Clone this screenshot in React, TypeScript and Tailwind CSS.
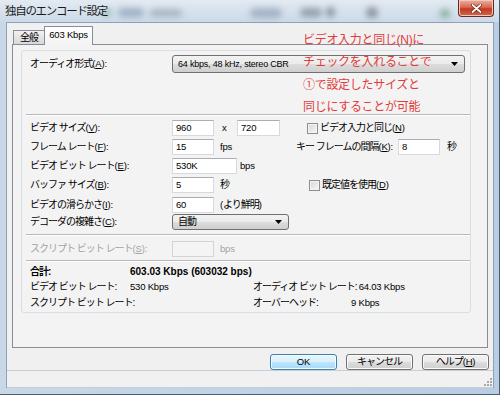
import type { ReactNode } from "react";

// Win7 style "独自のエンコード設定" dialog

function Mn({ jp, k, colon = true }: { jp: string; k: string; colon?: boolean }) {
  return (
    <span className="whitespace-nowrap">
      <span className="text-[10px] tracking-[-1px]">{jp}</span>(
      <span className="underline underline-offset-1">{k}</span>){colon ? ":" : ""}
    </span>
  );
}

function Jp({ children }: { children: ReactNode }) {
  return <span className="whitespace-nowrap text-[10px] tracking-[-1px]">{children}</span>;
}

function TextBox({ value, w, disabled }: { value?: string; w: string; disabled?: boolean }) {
  return (
    <div
      className={`flex h-[16px] shrink-0 items-center border pl-[3px] leading-none ${w} ${
        disabled
          ? "border-[#d4d4d4] bg-[#f4f4f4]"
          : "border-[#d6d9e0] border-t-[#abadb3] bg-white"
      }`}
    >
      {value}
    </div>
  );
}

function Combo({ text, w, h }: { text: ReactNode; w: string; h: string }) {
  return (
    <div
      className={`flex shrink-0 items-center justify-between rounded-[3px] border border-[#707070] bg-[linear-gradient(#f2f2f2,#ebebeb_50%,#dddddd_50%,#cfcfcf)] pl-[5px] pr-[6px] leading-none ${w} ${h}`}
    >
      <span>{text}</span>
      <svg width="7" height="4" viewBox="0 0 7 4" aria-hidden="true">
        <path d="M0 0h7L3.5 4z" fill="#000" />
      </svg>
    </div>
  );
}

function Check() {
  return (
    <span className="inline-block h-[11px] w-[11px] shrink-0 border border-[#8f8f8f] bg-[linear-gradient(135deg,#d8d8d8,#f7f7f7)] shadow-[inset_0_0_0_1px_#f4f4f4]" />
  );
}

function Sep() {
  return <div className="ml-[4px] h-px bg-[#b9b9b9] shadow-[0_1px_0_#ffffff]" />;
}

function Btn({ children, primary }: { children: ReactNode; primary?: boolean }) {
  return (
    <div
      className={`flex h-[16px] w-[67px] items-center justify-center rounded-[3px] border leading-none ${
        primary
          ? "border-[#3c7fb1] bg-[linear-gradient(#eaf6fd,#d9f0fc_50%,#bee6fd_50%,#a7d9f5)] shadow-[inset_0_0_0_1px_#f2fbff]"
          : "border-[#707070] bg-[linear-gradient(#f2f2f2,#ebebeb_50%,#dddddd_50%,#cfcfcf)] shadow-[inset_0_0_0_1px_#fbfbfb]"
      }`}
    >
      {children}
    </div>
  );
}

const blobs = [
  "left-[103px] top-[9px] h-[7px] w-[8px] bg-[#5f9a7a]",
  "left-[118px] top-[8px] h-[9px] w-[26px] bg-[#7c93ad]",
  "left-[150px] top-[9px] h-[8px] w-[32px] bg-[#8e9aa8]",
  "left-[250px] top-[8px] h-[10px] w-[32px] bg-[#8496ab]",
  "left-[300px] top-[8px] h-[9px] w-[22px] bg-[#6b7785]",
  "left-[326px] top-[7px] h-[10px] w-[9px] bg-[#59626c]",
  "left-[366px] top-[7px] h-[11px] w-[12px] bg-[#5c6570]",
  "left-[440px] top-[9px] h-[9px] w-[10px] bg-[#4f8f63]",
];

export default function App() {
  return (
    <div className="relative flex h-[395px] w-[500px] flex-col overflow-hidden border-b border-r border-[#4c5d70] bg-[linear-gradient(90deg,#c9d8e8,#b8cde4)] font-['Liberation_Sans','Noto_Sans_CJK_JP',sans-serif] text-[9.5px] tracking-[-0.2px] text-black">
      {/* title bar */}
      <div className="relative flex h-[22px] shrink-0 items-start bg-[linear-gradient(#e3eaf2,#cbd9e8)]">
        {blobs.map((b) => (
          <div key={b} className={`absolute rounded-full opacity-60 blur-[3px] ${b}`} />
        ))}
        <span className="relative pl-[5px] pt-[4px] text-[11.5px] leading-[14px] tracking-[-1.3px] text-[#1b1b1b]">
          独自のエンコード設定
        </span>
        <div className="relative ml-auto mr-[5px] flex h-[17px] w-[36px] items-center justify-center rounded-b-[4px] border border-t-0 border-[#6a2a20] bg-[linear-gradient(#eab0a2,#d86a52_45%,#c4391f_55%,#cf6a4c)] shadow-[inset_0_0_0_1px_#f3c7bb]">
          <svg width="11" height="9" viewBox="0 0 11 9" aria-hidden="true">
            <path d="M1.5 1l8 7M9.5 1l-8 7" stroke="#5a1a10" strokeWidth="3" strokeLinecap="round" />
            <path d="M1.5 1l8 7M9.5 1l-8 7" stroke="#ffffff" strokeWidth="1.8" strokeLinecap="round" />
          </svg>
        </div>
      </div>

      {/* frame body */}
      <div className="flex flex-1 flex-col pb-[6px] pl-[6px] pr-[5px]">
        <div className="flex flex-1 flex-col border-x border-t border-[#8ea1b5] bg-[#f0f0f0]">
          {/* tabs */}
          <div className="flex h-[21px] shrink-0 items-end pl-[6px]">
            <div className="flex h-[14px] w-[32px] items-center justify-center border border-b-0 border-[#898c95] bg-[linear-gradient(#f2f2f2,#e4e4e4_50%,#d9d9d9)] leading-none">
              <Jp>全般</Jp>
            </div>
            <div className="relative z-10 -mb-px -ml-px flex h-[19px] w-[49px] items-center justify-center border border-b-0 border-[#898c95] bg-[linear-gradient(#ffffff,#f3f3f3)] pb-[2px] leading-none">
              603 Kbps
            </div>
          </div>

          {/* tab page */}
          <div className="mx-[5px] h-[304px] shrink-0 border border-[#898c95] bg-[#f3f3f3]">
            <div className="ml-[8px] mr-[16px] mt-[5px] flex h-[263px] flex-col rounded-[3px] border border-[#d5dfe5]">
              <div className="mt-[4px] flex h-[18px] items-center pl-[8px]">
                <div className="w-[142px]">
                  <Mn jp="オーディオ形式" k="A" />
                </div>
                <Combo
                  text={<span className="text-[9px]">64 kbps, 48 kHz, stereo CBR</span>}
                  w="w-[293px]"
                  h="h-[18px]"
                />
              </div>

              <div className="mt-[41px]">
                <Sep />
              </div>

              {/* video size */}
              <div className="mt-[5px] flex h-[16px] items-center pl-[8px]">
                <div className="w-[142px]">
                  <Mn jp="ビデオ サイズ" k="V" />
                </div>
                <TextBox value="960" w="w-[42px]" />
                <span className="w-[23px] pl-[8px]">x</span>
                <TextBox value="720" w="w-[43px]" />
                <div className="ml-[27px] flex items-center gap-[2px]">
                  <Check />
                  <Mn jp="ビデオ入力と同じ" k="N" colon={false} />
                </div>
              </div>

              {/* frame rate / key frame */}
              <div className="mt-[3px] flex h-[16px] items-center pl-[8px]">
                <div className="w-[142px]">
                  <Mn jp="フレーム レート" k="F" />
                </div>
                <TextBox value="15" w="w-[42px]" />
                <span className="w-[76px] pl-[6px]">fps</span>
                <div className="w-[103px] text-right">
                  <Mn jp="キー フレームの間隔" k="K" />
                </div>
                <div className="ml-[5px]">
                  <TextBox value="8" w="w-[42px]" />
                </div>
                <span className="ml-[7px]">
                  <Jp>秒</Jp>
                </span>
              </div>

              {/* bitrate */}
              <div className="mt-[3px] flex h-[16px] items-center pl-[8px]">
                <div className="w-[142px]">
                  <Mn jp="ビデオ ビット レート" k="E" />
                </div>
                <TextBox value="530K" w="w-[65px]" />
                <span className="pl-[3px]">bps</span>
              </div>

              {/* buffer */}
              <div className="mt-[3px] flex h-[16px] items-center pl-[8px]">
                <div className="w-[142px]">
                  <Mn jp="バッファ サイズ" k="B" />
                </div>
                <TextBox value="5" w="w-[42px]" />
                <span className="w-[95px] pl-[6px]">
                  <Jp>秒</Jp>
                </span>
                <div className="flex items-center gap-[2px]">
                  <Check />
                  <Mn jp="既定値を使用" k="D" colon={false} />
                </div>
              </div>

              {/* smoothness */}
              <div className="mt-[4px] flex h-[16px] items-center pl-[8px]">
                <div className="w-[142px]">
                  <Mn jp="ビデオの滑らかさ" k="I" />
                </div>
                <TextBox value="60" w="w-[42px]" />
                <span className="pl-[6px]">
                  (<Jp>より鮮明</Jp>)
                </span>
              </div>

              {/* decoder complexity */}
              <div className="mt-[1px] flex h-[16px] items-center pl-[8px]">
                <div className="w-[142px]">
                  <Mn jp="デコーダの複雑さ" k="C" />
                </div>
                <Combo text={<Jp>自動</Jp>} w="w-[117px]" h="h-[16px]" />
              </div>

              <div className="mt-[4px]">
                <Sep />
              </div>

              {/* script bitrate (disabled) */}
              <div className="mt-[6px] flex h-[16px] items-center pl-[8px] text-[#a3a3a3]">
                <div className="w-[142px]">
                  <Mn jp="スクリプト ビット レート" k="S" />
                </div>
                <TextBox w="w-[42px]" disabled />
                <span className="pl-[6px]">bps</span>
              </div>

              <div className="mt-[3px]">
                <Sep />
              </div>

              {/* summary */}
              <div className="mt-[3px] flex h-[15px] items-center pl-[8px] font-bold">
                <div className="w-[100px]">
                  <Jp>合計:</Jp>
                </div>
                <span className="text-[10px] tracking-normal">603.03 Kbps (603032 bps)</span>
              </div>
              <div className="flex h-[16px] items-center pl-[8px]">
                <div className="w-[100px]">
                  <Jp>ビデオ ビット レート:</Jp>
                </div>
                <span className="w-[123px]">530 Kbps</span>
                <div className="min-w-[95px]">
                  <Jp>オーディオ ビット レート:</Jp>
                </div>
                <span className="pl-[2px]">64.03 Kbps</span>
              </div>
              <div className="flex h-[16px] items-center pl-[8px]">
                <div className="w-[100px]">
                  <Jp>スクリプト ビット レート:</Jp>
                </div>
                <span className="w-[123px]" />
                <div className="min-w-[95px]">
                  <Jp>オーバーヘッド:</Jp>
                </div>
                <span className="pl-[3px]">9 Kbps</span>
              </div>
            </div>
          </div>

          {/* buttons */}
          <div className="flex h-[22px] shrink-0 items-start justify-end gap-[9px] pr-[4px] pt-[6px]">
            <Btn primary>OK</Btn>
            <Btn>
              <Jp>キャンセル</Jp>
            </Btn>
            <Btn>
              <Mn jp="ヘルプ" k="H" colon={false} />
            </Btn>
          </div>

          {/* status strip */}
          <div className="flex h-[18px] shrink-0 items-end justify-end border-b border-t border-[#c9ced6] bg-[#f2f1f1] pb-[1px] pr-[1px]">
            <svg width="8" height="8" viewBox="0 0 8 8" aria-hidden="true">
              <g fill="#a9a9a9">
                <rect x="6" y="0" width="2" height="2" />
                <rect x="3" y="3" width="2" height="2" />
                <rect x="6" y="3" width="2" height="2" />
                <rect x="0" y="6" width="2" height="2" />
                <rect x="3" y="6" width="2" height="2" />
                <rect x="6" y="6" width="2" height="2" />
              </g>
            </svg>
          </div>
        </div>
      </div>

      {/* red annotation over the dialog */}
      <div className="absolute left-[303px] top-[29px] text-[12px] leading-[22.3px] tracking-[-0.3px] text-[#e23b3b]">
        <div>ビデオ入力と同じ(N)に</div>
        <div>チェックを入れることで</div>
        <div>①で設定したサイズと</div>
        <div>同じにすることが可能</div>
      </div>
    </div>
  );
}
